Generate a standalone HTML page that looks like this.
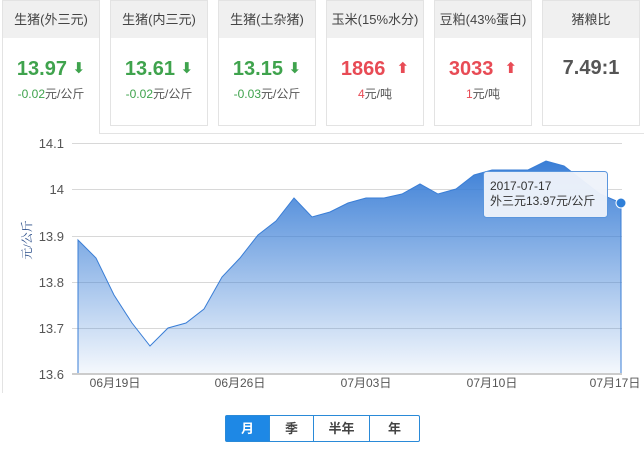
<!DOCTYPE html>
<html><head><meta charset="utf-8"><style>
*{margin:0;padding:0;box-sizing:border-box}
body{width:644px;height:449px;background:#fff;font-family:"Liberation Sans","Noto Sans CJK SC",sans-serif;position:relative;overflow:hidden}
.tab{position:absolute;top:0;width:98px;height:126px;border:1px solid #e3e3e3;background:#fff;text-align:center}
.tab .h{height:37px;background:#f0f0f0;font-size:13px;line-height:37px;color:#444}
.tab .v{font-size:20px;font-weight:bold;margin-top:18px;line-height:24px}
.tab .v i{font-style:normal;font-family:"DejaVu Sans",sans-serif;font-size:15px;vertical-align:2px}
.tab .s{font-size:12px;margin-top:4px}
.g{color:#3fa34d}.r{color:#e84b55}
.btns{position:absolute;left:225px;top:415px;height:27px;width:195px;border:1px solid #2a8ad8;border-radius:2px;display:flex;font-size:13px;font-weight:bold;color:#444}
.btns div{text-align:center;line-height:25px;border-right:1px solid #2a8ad8}
</style></head><body>
<div style="position:absolute;left:2px;top:133px;width:642px;height:260px;border-left:1px solid #e3e3e3;border-top:1px solid #e3e3e3"></div>
<div class="tab" style="left:2px;height:134px;border-bottom:none"><div class="h">生猪(外三元)</div><div class="v g">13.97 <i>⬇</i></div><div class="s g">-0.02<span style="color:#555">元/公斤</span></div></div>
<div class="tab" style="left:110px"><div class="h">生猪(内三元)</div><div class="v g">13.61 <i>⬇</i></div><div class="s g">-0.02<span style="color:#555">元/公斤</span></div></div>
<div class="tab" style="left:218px"><div class="h">生猪(土杂猪)</div><div class="v g">13.15 <i>⬇</i></div><div class="s g">-0.03<span style="color:#555">元/公斤</span></div></div>
<div class="tab" style="left:326px"><div class="h">玉米(15%水分)</div><div class="v r">1866 &nbsp;<i>⬆</i></div><div class="s r">4<span style="color:#555">元/吨</span></div></div>
<div class="tab" style="left:434px"><div class="h">豆粕(43%蛋白)</div><div class="v r">3033 &nbsp;<i>⬆</i></div><div class="s r">1<span style="color:#555">元/吨</span></div></div>
<div class="tab" style="left:542px"><div class="h">猪粮比</div><div class="v" style="color:#555">7.49:1</div></div>
<svg style="position:absolute;left:0;top:0" width="644" height="449">
<defs><linearGradient id="gr" x1="0" y1="0" x2="0" y2="1"><stop offset="0" stop-color="#3a7ed6"/><stop offset="1" stop-color="#3a7ed6" stop-opacity="0.05"/></linearGradient></defs>
<g stroke="#d8d8d8" stroke-width="1">
<line x1="72" y1="143.5" x2="622" y2="143.5"/><line x1="72" y1="189.5" x2="622" y2="189.5"/><line x1="72" y1="236.5" x2="622" y2="236.5"/><line x1="72" y1="282.5" x2="622" y2="282.5"/><line x1="72" y1="328.5" x2="622" y2="328.5"/></g>
<polygon fill="url(#gr)" stroke="#3a7ed6" stroke-width="1" points="78,240 96,258 114,295 132,323 150,346 168,328 186,323 204,309 222,277 240,258 258,235 276,221 294,198 312,217 330,212 348,203 366,198 384,198 402,194 420,184 438,194 456,189 474,175 492,170 510,170 528,170 546,161 564,166 582,180 600,194 621,203 621,374 78,374"/>
<line x1="72" y1="374" x2="622" y2="374" stroke="#ccc" stroke-width="2"/>
<circle cx="621" cy="203" r="5" fill="#2f7fd8" stroke="#fff" stroke-width="1"/>
<g font-size="13" fill="#555" text-anchor="end" font-family="Liberation Sans,sans-serif">
<text x="64" y="148">14.1</text><text x="64" y="194">14</text><text x="64" y="241">13.9</text><text x="64" y="287">13.8</text><text x="64" y="333">13.7</text><text x="64" y="379">13.6</text></g>
<g font-size="12" fill="#555" text-anchor="middle" font-family="Liberation Sans,Noto Sans CJK SC,sans-serif">
<text x="115" y="387">06月19日</text><text x="240" y="387">06月26日</text><text x="366" y="387">07月03日</text><text x="492" y="387">07月10日</text><text x="615" y="387">07月17日</text></g>
<text transform="translate(31,240) rotate(-90)" font-size="12" fill="#2c4f8a" text-anchor="middle" font-family="Liberation Serif,Noto Serif CJK SC,serif">元/公斤</text>
<rect x="483.5" y="171.5" width="124" height="46" rx="3" fill="#eef3fa" fill-opacity="0.96" stroke="#5b96dd"/>
<text x="490" y="190" font-size="12" fill="#333" font-family="Liberation Sans,Noto Sans CJK SC,sans-serif">2017-07-17</text>
<text x="490" y="205" font-size="12" fill="#333" font-family="Liberation Sans,Noto Sans CJK SC,sans-serif">外三元13.97元/公斤</text>
</svg>
<div class="btns"><div style="width:44px;background:#1e88e5;color:#fff">月</div><div style="width:44px">季</div><div style="width:56px">半年</div><div style="width:49px;border-right:none">年</div></div>
</body></html>
